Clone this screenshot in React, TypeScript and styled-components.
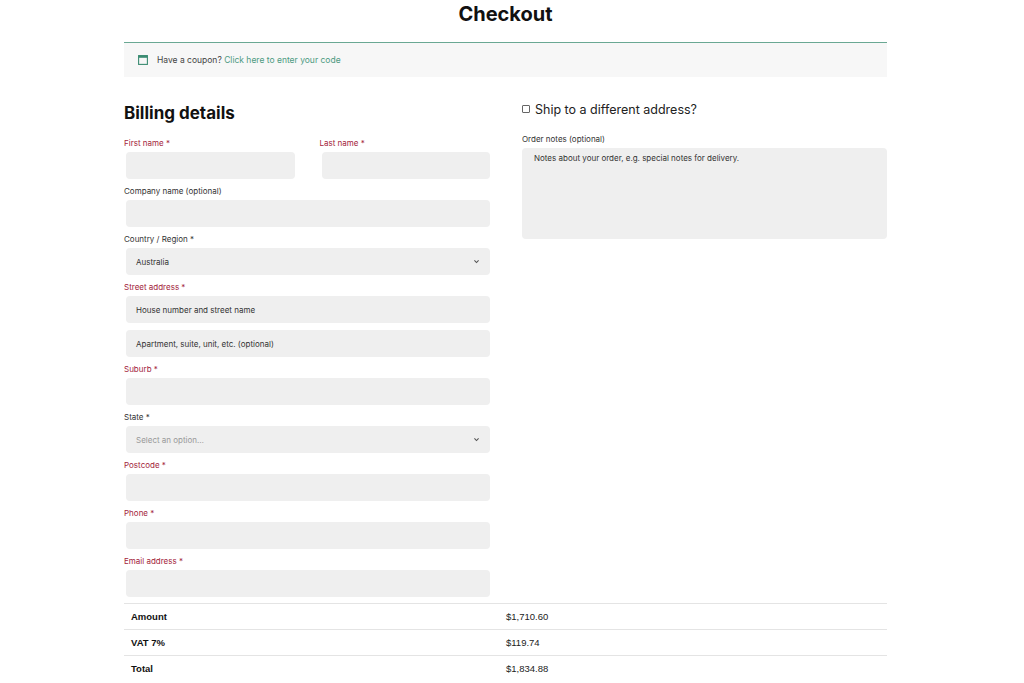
import React from "react";
import styled, { createGlobalStyle } from "styled-components";

const Global = createGlobalStyle`
  body { margin: 0; background: #fff; font-family: "Inter", "Noto Sans", sans-serif; color: #222; }
`;
const Page = styled.div`width: 763px; margin-left: 124px;`;
const Title = styled.h1`margin: 0; height: 42px; line-height: 28px; text-align: center; font-size: 20px; font-weight: 700; color: #111;`;
const Coupon = styled.div`
  height: 34px; border-top: 1.5px solid #6aa893; background: #f7f7f7;
  display: flex; align-items: center; gap: 9px; padding-left: 14px; font-size: 8.5px; color: #444;
  a { color: #4d9a82; text-decoration: none; }
`;
const Columns = styled.div`display: grid; grid-template-columns: 366px 365px; gap: 32px; margin-top: 24px;`;
const H2 = styled.h2`margin: 0 0 12px; font-size: 17px; font-weight: 700; color: #111; line-height: 24px;`;
const Row = styled.div`display: grid; grid-template-columns: 1fr 1fr; gap: 25px;`;
const Field = styled.div`margin-bottom: 6px;`;
const Label = styled.div<{ $req?: boolean }>`
  font-size: 8px; line-height: 12px; margin-bottom: 3px; color: ${p => (p.$req ? "#a3243b" : "#333")};
`;
const Input = styled.div<{ $ph?: boolean }>`
  height: 27px; margin-left: 2px; border-radius: 4px; background: #efefef; display: flex; align-items: center;
  justify-content: space-between; padding: 0 10px; font-size: 8px; color: ${p => (p.$ph ? "#999" : "#333")};
`;
const Extra = styled(Input)`margin-top: 7px;`;
const Ship = styled.div`display: flex; align-items: center; gap: 5px; font-size: 12.5px; color: #222; height: 24px; margin: -4px 0 12px;`;
const Box = styled.span`width: 6px; height: 6px; border: 1px solid #666; border-radius: 1px;`;
const Notes = styled.div`height: 91px; box-sizing: border-box; border-radius: 4px; background: #efefef; padding: 5px 12px; font-size: 8px; color: #333;`;
const Table = styled.div`font-family: "Liberation Sans", Arial, sans-serif; font-size: 9.5px; color: #222;`;
const TRow = styled.div`display: grid; grid-template-columns: 375px 1fr; height: 25px; align-items: center; border-top: 1px solid #e4e4e4; padding-left: 7px;`;
const TH = styled.div`font-weight: 700; color: #111;`;

const Chevron = () => (
  <svg width="7" height="7" viewBox="0 0 10 10"><path d="M2 3.5 5 6.5 8 3.5" stroke="#555" strokeWidth="1.6" fill="none" /></svg>
);

const F = ({ label, req, children }: { label: string; req?: boolean; children?: React.ReactNode }) => (
  <Field>
    <Label $req={req}>{label} *</Label>
    {children ?? <Input />}
  </Field>
);

export default function App() {
  return (
    <Page>
      <Global />
      <Title>Checkout</Title>
      <Coupon>
        <svg width="10" height="10" viewBox="0 0 10 10"><rect x="0.6" y="0.6" width="8.8" height="8.8" fill="none" stroke="#3b8c72" strokeWidth="1.1" /><rect x="0.6" y="0.6" width="8.8" height="2.2" fill="#3b8c72" /></svg>
        <span>Have a coupon? <a href="#">Click here to enter your code</a></span>
      </Coupon>
      <Columns>
        <div>
          <H2>Billing details</H2>
          <Row>
            <F label="First name" req />
            <F label="Last name" req />
          </Row>
          <Field>
            <Label>Company name (optional)</Label>
            <Input />
          </Field>
          <F label="Country / Region"><Input>Australia<Chevron /></Input></F>
          <F label="Street address" req>
            <Input>House number and street name</Input>
            <Extra>Apartment, suite, unit, etc. (optional)</Extra>
          </F>
          <F label="Suburb" req />
          <F label="State"><Input $ph>Select an option…<Chevron /></Input></F>
          <F label="Postcode" req />
          <F label="Phone" req />
          <F label="Email address" req />
        </div>
        <div>
          <Ship><Box />Ship to a different address?</Ship>
          <Label>Order notes (optional)</Label>
          <Notes>Notes about your order, e.g. special notes for delivery.</Notes>
        </div>
      </Columns>
      <Table>
        <TRow><TH>Amount</TH><div>$1,710.60</div></TRow>
        <TRow><TH>VAT 7%</TH><div>$119.74</div></TRow>
        <TRow><TH>Total</TH><div>$1,834.88</div></TRow>
      </Table>
    </Page>
  );
}
